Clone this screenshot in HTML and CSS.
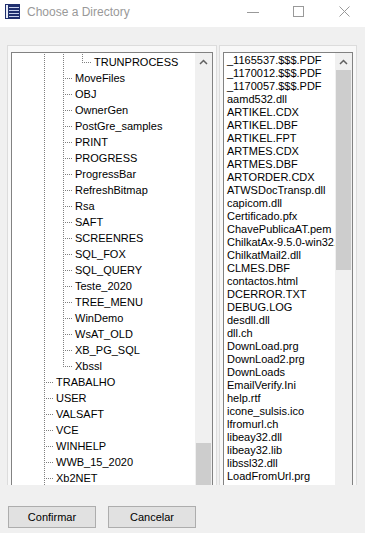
FILE: index.html
```html
<!DOCTYPE html>
<html>
<head>
<meta charset="utf-8">
<link rel="stylesheet" href="styles.css">
</head>
<body>
<div class="window">
  <div class="titlebar">
    <svg class="appicon" width="15" height="15" viewBox="0 0 15 15">
      <rect x="0" y="0" width="15" height="15" fill="#1f2f6e"/>
      <rect x="1" y="1" width="2" height="13" fill="#e8ecf6"/>
      <rect x="4" y="3" width="10" height="1" fill="#c9d3ee"/>
      <rect x="4" y="6" width="10" height="1" fill="#c9d3ee"/>
      <rect x="4" y="9" width="10" height="1" fill="#c9d3ee"/>
      <rect x="4" y="12" width="10" height="1" fill="#c9d3ee"/>
    </svg>
    <span class="title">Choose a Directory</span>
    <div class="controls">
      <svg class="ctl-min" width="12" height="10" viewBox="0 0 12 10"><rect x="0" y="5" width="12" height="1" fill="#999"/></svg>
      <svg class="ctl-max" width="11" height="11" viewBox="0 0 11 11"><rect x="0.5" y="0.5" width="10" height="10" fill="none" stroke="#999"/></svg>
      <svg class="ctl-close" width="11" height="11" viewBox="0 0 11 11"><path d="M0.5 0.5 L10.5 10.5 M10.5 0.5 L0.5 10.5" stroke="#999" stroke-width="1" fill="none"/></svg>
    </div>
  </div>
  <div class="body">
    <div class="panels">
      <div class="frame frame-left">
        <div class="list list-left">
          <div class="content tree">
            <div class="row"><span class="g v"></span><span class="g v"></span><span class="g c last"></span><span class="t">TRUNPROCESS</span></div>
            <div class="row"><span class="g v"></span><span class="g c"></span><span class="t">MoveFiles</span></div>
            <div class="row"><span class="g v"></span><span class="g c"></span><span class="t">OBJ</span></div>
            <div class="row"><span class="g v"></span><span class="g c"></span><span class="t">OwnerGen</span></div>
            <div class="row"><span class="g v"></span><span class="g c"></span><span class="t">PostGre_samples</span></div>
            <div class="row"><span class="g v"></span><span class="g c"></span><span class="t">PRINT</span></div>
            <div class="row"><span class="g v"></span><span class="g c"></span><span class="t">PROGRESS</span></div>
            <div class="row"><span class="g v"></span><span class="g c"></span><span class="t">ProgressBar</span></div>
            <div class="row"><span class="g v"></span><span class="g c"></span><span class="t">RefreshBitmap</span></div>
            <div class="row"><span class="g v"></span><span class="g c"></span><span class="t">Rsa</span></div>
            <div class="row"><span class="g v"></span><span class="g c"></span><span class="t">SAFT</span></div>
            <div class="row"><span class="g v"></span><span class="g c"></span><span class="t">SCREENRES</span></div>
            <div class="row"><span class="g v"></span><span class="g c"></span><span class="t">SQL_FOX</span></div>
            <div class="row"><span class="g v"></span><span class="g c"></span><span class="t">SQL_QUERY</span></div>
            <div class="row"><span class="g v"></span><span class="g c"></span><span class="t">Teste_2020</span></div>
            <div class="row"><span class="g v"></span><span class="g c"></span><span class="t">TREE_MENU</span></div>
            <div class="row"><span class="g v"></span><span class="g c"></span><span class="t">WinDemo</span></div>
            <div class="row"><span class="g v"></span><span class="g c"></span><span class="t">WsAT_OLD</span></div>
            <div class="row"><span class="g v"></span><span class="g c"></span><span class="t">XB_PG_SQL</span></div>
            <div class="row"><span class="g v"></span><span class="g c last"></span><span class="t">Xbssl</span></div>
            <div class="row"><span class="g c"></span><span class="t">TRABALHO</span></div>
            <div class="row"><span class="g c"></span><span class="t">USER</span></div>
            <div class="row"><span class="g c"></span><span class="t">VALSAFT</span></div>
            <div class="row"><span class="g c"></span><span class="t">VCE</span></div>
            <div class="row"><span class="g c"></span><span class="t">WINHELP</span></div>
            <div class="row"><span class="g c"></span><span class="t">WWB_15_2020</span></div>
            <div class="row"><span class="g c"></span><span class="t">Xb2NET</span></div>
          </div>
          <div class="sb">
            <div class="arrow"><svg width="9" height="6" viewBox="0 0 9 6"><path d="M1 5 L4.5 1.5 L8 5" fill="none" stroke="#606060" stroke-width="1.5"/></svg></div>
            <div class="thumb thumb-left"></div>
          </div>
        </div>
      </div>
      <div class="frame frame-right">
        <div class="list list-right">
          <div class="content files">
            <div class="file">_1165537.$$$.PDF</div>
            <div class="file">_1170012.$$$.PDF</div>
            <div class="file">_1170057.$$$.PDF</div>
            <div class="file">aamd532.dll</div>
            <div class="file">ARTIKEL.CDX</div>
            <div class="file">ARTIKEL.DBF</div>
            <div class="file">ARTIKEL.FPT</div>
            <div class="file">ARTMES.CDX</div>
            <div class="file">ARTMES.DBF</div>
            <div class="file">ARTORDER.CDX</div>
            <div class="file">ATWSDocTransp.dll</div>
            <div class="file">capicom.dll</div>
            <div class="file">Certificado.pfx</div>
            <div class="file">ChavePublicaAT.pem</div>
            <div class="file">ChilkatAx-9.5.0-win32.dll</div>
            <div class="file">ChilkatMail2.dll</div>
            <div class="file">CLMES.DBF</div>
            <div class="file">contactos.html</div>
            <div class="file">DCERROR.TXT</div>
            <div class="file">DEBUG.LOG</div>
            <div class="file">desdll.dll</div>
            <div class="file">dll.ch</div>
            <div class="file">DownLoad.prg</div>
            <div class="file">DownLoad2.prg</div>
            <div class="file">DownLoads</div>
            <div class="file">EmailVerify.Ini</div>
            <div class="file">help.rtf</div>
            <div class="file">icone_sulsis.ico</div>
            <div class="file">lfromurl.ch</div>
            <div class="file">libeay32.dll</div>
            <div class="file">libeay32.lib</div>
            <div class="file">libssl32.dll</div>
            <div class="file">LoadFromUrl.prg</div>
          </div>
          <div class="sb">
            <div class="arrow"><svg width="9" height="6" viewBox="0 0 9 6"><path d="M1 5 L4.5 1.5 L8 5" fill="none" stroke="#606060" stroke-width="1.5"/></svg></div>
            <div class="thumb thumb-right"></div>
          </div>
        </div>
      </div>
    </div>
    <div class="buttons">
      <button class="btn">Confirmar</button>
      <button class="btn">Cancelar</button>
    </div>
  </div>
</div>
</body>
</html>
```

FILE: styles.css
```css
html, body {
  margin: 0;
  padding: 0;
  background: #f0f0f0;
  font-family: "Liberation Sans", Arial, sans-serif;
}

.window {
  width: 365px;
  height: 533px;
  overflow: hidden;
  display: flex;
  flex-direction: column;
}

.titlebar {
  height: 27px;
  flex: none;
  background: #ffffff;
  display: flex;
  align-items: flex-start;
}

.appicon {
  margin: 4px 0 0 5px;
  flex: none;
}

.title {
  margin: 5px 0 0 7px;
  font-size: 12px;
  line-height: 15px;
  color: #999999;
}

.controls {
  margin-left: auto;
  display: flex;
  align-items: flex-start;
  padding: 6px 15px 0 0;
}

.ctl-min { margin-top: 1px; }
.ctl-max { margin-left: 34px; }
.ctl-close { margin-left: 35px; }

.body {
  flex: 1;
  padding: 18px 0 0 7px;
}

.panels {
  display: flex;
  gap: 2px;
  height: 440px;
  overflow: hidden;
  align-items: flex-start;
}

.frame {
  border: 1px solid #dcdcdc;
  background: #f8f8f8;
  padding: 6px 3px 0 3px;
  height: 520px;
  box-sizing: border-box;
}

.frame-left { width: 210px; }
.frame-right { width: 138px; }

.list {
  border: 1px solid #828282;
  background: #ffffff;
  display: flex;
  height: 500px;
  box-sizing: border-box;
}

.content {
  flex: 1;
  min-width: 0;
  overflow: hidden;
  padding-top: 1px;
  font-size: 11px;
  color: #000;
  white-space: nowrap;
}

.tree {
  padding-left: 23px;
}

.row {
  display: flex;
  height: 16px;
  line-height: 16px;
}

.g {
  flex: none;
  width: 19px;
  height: 16px;
  background-repeat: no-repeat;
}

.g.v {
  background-image: repeating-linear-gradient(to bottom, #808080 0 1px, transparent 1px 2px);
  background-size: 1px 16px;
  background-position: 9px 0;
}

.g.c {
  background-image:
    repeating-linear-gradient(to bottom, #808080 0 1px, transparent 1px 2px),
    repeating-linear-gradient(to right, #808080 0 1px, transparent 1px 2px);
  background-size: 1px 16px, 9px 1px;
  background-position: 9px 0, 11px 8px;
}

.g.c.last {
  background-size: 1px 9px, 9px 1px;
}

.t {
  padding-left: 2px;
}

.files {
  padding-left: 3px;
}

.file {
  height: 13px;
  line-height: 13px;
}

.sb {
  flex: none;
  width: 17px;
  background: #f0f0f0;
  display: flex;
  flex-direction: column;
}

.arrow {
  height: 17px;
  display: flex;
  align-items: center;
  justify-content: center;
}

.thumb {
  background: #cdcdcd;
  margin: 0 1px;
}

.thumb-left {
  margin-top: 373px;
  height: 60px;
}

.thumb-right {
  height: 200px;
}

.buttons {
  display: flex;
  gap: 12px;
  margin: 21px 0 0 1px;
}

.btn {
  width: 88px;
  height: 22px;
  padding: 0;
  background: #e1e1e1;
  border: 1px solid #adadad;
  font-family: "Liberation Sans", Arial, sans-serif;
  font-size: 11px;
  color: #000;
}
```
